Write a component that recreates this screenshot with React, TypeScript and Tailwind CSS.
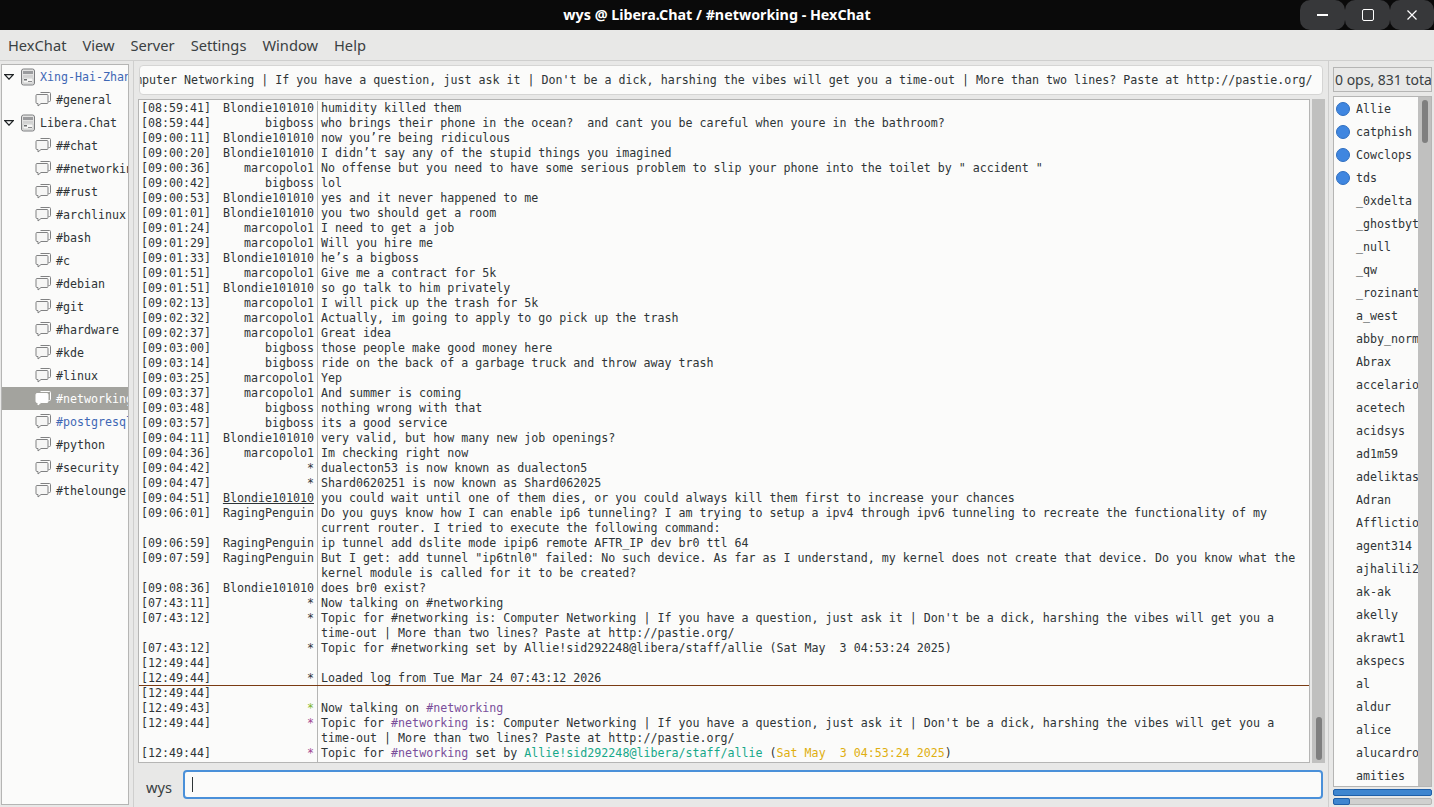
import React from 'react';

type Line = { time?: string; nick?: string; nickClass?: string; msg?: React.ReactNode };

const chan = <span className="text-[#7a4f9a]">#networking</span>;

const lines: Line[] = [
  { time: '08:59:41', nick: 'Blondie101010', msg: 'humidity killed them' },
  { time: '08:59:44', nick: 'bigboss', msg: 'who brings their phone in the ocean?  and cant you be careful when youre in the bathroom?' },
  { time: '09:00:11', nick: 'Blondie101010', msg: 'now you’re being ridiculous' },
  { time: '09:00:20', nick: 'Blondie101010', msg: 'I didn’t say any of the stupid things you imagined' },
  { time: '09:00:36', nick: 'marcopolo1', msg: 'No offense but you need to have some serious problem to slip your phone into the toilet by " accident "' },
  { time: '09:00:42', nick: 'bigboss', msg: 'lol' },
  { time: '09:00:53', nick: 'Blondie101010', msg: 'yes and it never happened to me' },
  { time: '09:01:01', nick: 'Blondie101010', msg: 'you two should get a room' },
  { time: '09:01:24', nick: 'marcopolo1', msg: 'I need to get a job' },
  { time: '09:01:29', nick: 'marcopolo1', msg: 'Will you hire me' },
  { time: '09:01:33', nick: 'Blondie101010', msg: 'he’s a bigboss' },
  { time: '09:01:51', nick: 'marcopolo1', msg: 'Give me a contract for 5k' },
  { time: '09:01:51', nick: 'Blondie101010', msg: 'so go talk to him privately' },
  { time: '09:02:13', nick: 'marcopolo1', msg: 'I will pick up the trash for 5k' },
  { time: '09:02:32', nick: 'marcopolo1', msg: 'Actually, im going to apply to go pick up the trash' },
  { time: '09:02:37', nick: 'marcopolo1', msg: 'Great idea' },
  { time: '09:03:00', nick: 'bigboss', msg: 'those people make good money here' },
  { time: '09:03:14', nick: 'bigboss', msg: 'ride on the back of a garbage truck and throw away trash' },
  { time: '09:03:25', nick: 'marcopolo1', msg: 'Yep' },
  { time: '09:03:37', nick: 'marcopolo1', msg: 'And summer is coming' },
  { time: '09:03:48', nick: 'bigboss', msg: 'nothing wrong with that' },
  { time: '09:03:57', nick: 'bigboss', msg: 'its a good service' },
  { time: '09:04:11', nick: 'Blondie101010', msg: 'very valid, but how many new job openings?' },
  { time: '09:04:36', nick: 'marcopolo1', msg: 'Im checking right now' },
  { time: '09:04:42', nick: '*', msg: 'dualecton53 is now known as dualecton5' },
  { time: '09:04:47', nick: '*', msg: 'Shard0620251 is now known as Shard062025' },
  { time: '09:04:51', nick: 'Blondie101010', nickClass: 'underline', msg: 'you could wait until one of them dies, or you could always kill them first to increase your chances' },
  { time: '09:06:01', nick: 'RagingPenguin', msg: 'Do you guys know how I can enable ip6 tunneling? I am trying to setup a ipv4 through ipv6 tunneling to recreate the functionality of my current router. I tried to execute the following command:' },
  { time: '09:06:59', nick: 'RagingPenguin', msg: 'ip tunnel add dslite mode ipip6 remote AFTR_IP dev br0 ttl 64' },
  { time: '09:07:59', nick: 'RagingPenguin', msg: 'But I get: add tunnel "ip6tnl0" failed: No such device. As far as I understand, my kernel does not create that device. Do you know what the kernel module is called for it to be created?' },
  { time: '09:08:36', nick: 'Blondie101010', msg: 'does br0 exist?' },
  { time: '07:43:11', nick: '*', msg: 'Now talking on #networking' },
  { time: '07:43:12', nick: '*', msg: "Topic for #networking is: Computer Networking | If you have a question, just ask it | Don't be a dick, harshing the vibes will get you a time-out | More than two lines? Paste at http://pastie.org/" },
  { time: '07:43:12', nick: '*', msg: 'Topic for #networking set by Allie!sid292248@libera/staff/allie (Sat May  3 04:53:24 2025)' },
  { time: '12:49:44' },
  { time: '12:49:44', nick: '*', msg: 'Loaded log from Tue Mar 24 07:43:12 2026' },
];

const newLines: Line[] = [
  { time: '12:49:44' },
  { time: '12:49:43', nick: '*', nickClass: 'text-[#7fb52a]', msg: <>Now talking on {chan}</> },
  {
    time: '12:49:44',
    nick: '*',
    nickClass: 'text-[#a0458f]',
    msg: <>Topic for {chan} is: Computer Networking | If you have a question, just ask it | Don't be a dick, harshing the vibes will get you a time-out | More than two lines? Paste at http://pastie.org/</>,
  },
  {
    time: '12:49:44',
    nick: '*',
    nickClass: 'text-[#a0458f]',
    msg: (
      <>
        Topic for {chan} set by <span className="text-[#16a889]">Allie!sid292248@libera/staff/allie</span> (
        <span className="text-[#dfaf0f]">Sat May  3 04:53:24 2025</span>)
      </>
    ),
  },
  {},
];

const channels: { name: string; cls?: string; selected?: boolean }[] = [
  { name: '##chat' },
  { name: '##networking' },
  { name: '##rust' },
  { name: '#archlinux' },
  { name: '#bash' },
  { name: '#c' },
  { name: '#debian' },
  { name: '#git' },
  { name: '#hardware' },
  { name: '#kde' },
  { name: '#linux' },
  { name: '#networking', selected: true },
  { name: '#postgresql', cls: 'text-[#3f68b5]' },
  { name: '#python' },
  { name: '#security' },
  { name: '#thelounge' },
];

const ops = ['Allie', 'catphish', 'Cowclops', 'tds'];
const users = [
  '_0xdelta', '_ghostbyte', '_null', '_qw', '_rozinante', 'a_west', 'abby_normal', 'Abrax', 'accelarion', 'acetech',
  'acidsys', 'ad1m59', 'adeliktas', 'Adran', 'Affliction', 'agent314', 'ajhalili2', 'ak-ak', 'akelly', 'akrawt1',
  'akspecs', 'al', 'aldur', 'alice', 'alucardrock', 'amities',
];

const ServerIcon = () => (
  <svg width="15" height="18" viewBox="0 0 15 18" className="shrink-0">
    <rect x="1.5" y="1" width="13" height="16" rx="2" fill="#e4e4e3" stroke="#7d7e80" />
    <rect x="3" y="3" width="10" height="3" fill="#9b9c9e" />
    <rect x="3" y="7.5" width="10" height="1" fill="#bfc0c1" />
    <rect x="3" y="10" width="10" height="5" fill="#f7f7f6" stroke="#a9aaab" strokeWidth="0.5" />
    <rect x="4" y="11" width="3" height="1.5" fill="#6d6e70" />
    <rect x="8" y="13" width="4" height="1" fill="#8a8b8d" />
  </svg>
);

const ChatIcon = ({ light }: { light?: boolean }) => (
  <svg width="17" height="17" viewBox="0 0 17 17" className="shrink-0">
    <path d="M5.5 1.5h9a1 1 0 0 1 1 1v7a1 1 0 0 1-1 1h-1" fill="none" stroke={light ? '#ffffff' : '#808182'} />
    <path
      d="M2 3.5h10a1 1 0 0 1 1 1v7a1 1 0 0 1-1 1H6l-3 2.5v-2.5H2a1 1 0 0 1-1-1v-7a1 1 0 0 1 1-1z"
      fill={light ? '#ffffff' : '#f6f6f5'}
      stroke={light ? '#ffffff' : '#808182'}
    />
  </svg>
);

const Arrow = () => (
  <svg width="10" height="6" viewBox="0 0 10 6" className="shrink-0">
    <path d="M.8.7h8.4L5 5.2z" fill="#fbfbfa" stroke="#1f2325" strokeWidth="1.2" />
  </svg>
);

const ChatRow = ({ line }: { line: Line }) => (
  <div className="flex leading-[15px] min-h-[15px]">
    <div className="w-[70px] shrink-0 pl-[2px] whitespace-pre">{line.time ? `[${line.time}]` : ''}</div>
    <div className={`w-[108px] shrink-0 text-right whitespace-pre pr-[3px] ${line.nickClass ?? ''}`}>{line.nick}</div>
    <div className="w-[1px] shrink-0 bg-[#b5b5b4]" />
    <div className="pl-[3px] flex-1 min-w-0 whitespace-pre-wrap">{line.msg}</div>
  </div>
);

export default function App() {
  return (
    <div className="w-[1434px] h-[807px] overflow-hidden flex flex-col bg-[#e8e8e7] text-[#2e3436] font-['Noto_Sans',sans-serif]">
      {/* title bar */}
      <div className="h-[30px] shrink-0 bg-[#0a0a0a] flex items-center relative">
        <div className="flex-1 text-center text-white font-bold text-[14.3px] leading-[30px]">
          wys @ Libera.Chat / #networking - HexChat
        </div>
        <div className="absolute right-0 top-0 flex">
          <div className="w-[45px] h-[30px] bg-[#37383a] rounded-[10px] flex items-center justify-center">
            <div className="w-[11px] h-[1.5px] bg-white" />
          </div>
          <div className="w-[45px] h-[30px] bg-[#37383a] rounded-[10px] flex items-center justify-center">
            <div className="w-[12px] h-[12px] border-[1.5px] border-white rounded-[2px]" />
          </div>
          <div className="w-[44px] h-[30px] bg-[#37383a] rounded-[10px] flex items-center justify-center">
            <svg width="12" height="12" viewBox="0 0 12 12">
              <path d="M1.5 1.5l9 9M10.5 1.5l-9 9" stroke="#fff" strokeWidth="1.2" />
            </svg>
          </div>
        </div>
      </div>

      {/* menu */}
      <div className="h-[31px] shrink-0 border-b border-[#cfcfce] flex items-center gap-[16px] pl-[8px] text-[14.67px] leading-[30px] text-[#3a4042]">
        <span>HexChat</span>
        <span>View</span>
        <span>Server</span>
        <span>Settings</span>
        <span>Window</span>
        <span>Help</span>
      </div>

      <div className="flex-1 min-h-0 flex">
        {/* server tree */}
        <div className="w-[133px] shrink-0 pl-[1px] pt-[3px] pb-[2px] pr-[4px]">
          <div className="h-full border border-[#b5b5b4] bg-[#fbfbfa] overflow-hidden font-['DejaVu_Sans_Mono',monospace] text-[11.65px] whitespace-nowrap">
            <div className="h-[23px] flex items-center pl-[2px]">
              <Arrow />
              <span className="ml-[6px]"><ServerIcon /></span>
              <span className="ml-[5px] pt-[2px] text-[#3f68b5]">Xing-Hai-Zhang</span>
            </div>
            <div className="h-[23px] flex items-center pl-[33px]">
              <ChatIcon />
              <span className="ml-[4px] pt-[2px]">#general</span>
            </div>
            <div className="h-[23px] flex items-center pl-[2px]">
              <Arrow />
              <span className="ml-[6px]"><ServerIcon /></span>
              <span className="ml-[5px] pt-[2px]">Libera.Chat</span>
            </div>
            {channels.map((c) => (
              <div
                key={c.name + (c.selected ? 's' : '')}
                className={`h-[23px] flex items-center pl-[33px] ${c.selected ? 'bg-[#a3a39e] text-white' : ''} ${c.cls ?? ''}`}
              >
                <ChatIcon light={c.selected} />
                <span className="ml-[4px] pt-[2px]">{c.name}</span>
              </div>
            ))}
          </div>
        </div>

        <div className="w-[1px] shrink-0 bg-[#cfcfce]" />

        {/* center */}
        <div className="w-[1194px] shrink-0 flex flex-col pl-[4px] pt-[4px] pb-[8px]">
          <div className="h-[30px] shrink-0 ml-[1px] mr-[5px] rounded-[4px] border border-[#d5d5d4] bg-[#fbfbfa] overflow-hidden flex items-center font-['DejaVu_Sans_Mono',monospace] text-[11.65px] whitespace-pre">
            <span className="pl-[3px] pr-[4px] pt-[2px]">
              <span className="-ml-[22px] inline-block">Computer Networking | If you have a question, just ask it | Don't be a dick, harshing the vibes will get you a time-out | More than two lines? Paste at http://pastie.org/</span>
            </span>
          </div>
          <div className="flex-1 min-h-0 flex mt-[4px]">
            <div className="w-[1172px] shrink-0 border border-[#b5b5b4] bg-[#fbfbfa] overflow-hidden pt-[1px] font-['DejaVu_Sans_Mono',monospace] text-[11.65px] text-[#2e3436]">
              {lines.map((l, i) => (
                <ChatRow key={i} line={l} />
              ))}
              <div className="h-[1px] bg-[#7a3b12] -mt-px relative" />
              {newLines.map((l, i) => (
                <ChatRow key={i} line={l} />
              ))}
            </div>
            <div className="w-[13px] ml-[2px] shrink-0 bg-[#c0c0bf] flex flex-col justify-end items-center pb-[3px]">
              <div className="w-[6px] h-[43px] rounded-full bg-[#7f7f7f]" />
            </div>
          </div>
          <div className="h-[29px] shrink-0 mt-[7px] flex items-center">
            <div className="w-[45px] pl-[8px] pt-[4px] text-[14.67px] text-[#3a4042]">wys</div>
            <div className="w-[1140px] h-[29px] rounded-[4px] border-2 border-[#4a90d9] bg-[#fbfbfa] flex items-center pl-[7px]">
              <div className="w-[1px] h-[15px] bg-[#2e3436]" />
            </div>
          </div>
        </div>

        <div className="w-[1px] shrink-0 bg-[#cfcfce]" />

        {/* user list */}
        <div className="flex-1 min-w-0 flex flex-col pl-[4px] pr-[2px] pt-[6px] pb-[2px]">
          <div className="h-[25px] shrink-0 border border-[#b5b5b4] pl-[1px] text-[14px] leading-[23px] whitespace-nowrap overflow-hidden text-[#3a4042]">
            0 ops, 831 total
          </div>
          <div className="flex-1 min-h-0 mt-[4px] border border-[#b5b5b4] flex overflow-hidden bg-[#fbfbfa]">
            <div className="flex-1 min-w-0 overflow-hidden font-['DejaVu_Sans_Mono',monospace] text-[11.65px] whitespace-nowrap">
              {ops.map((u) => (
                <div key={u} className="h-[23px] flex items-center pl-[2px]">
                  <span className="w-[14px] h-[14px] rounded-full bg-[#3f86e0] border border-[#2f6fc0] shrink-0" />
                  <span className="ml-[6px] pt-[2px]">{u}</span>
                </div>
              ))}
              {users.map((u) => (
                <div key={u} className="h-[23px] flex items-center pl-[22px] pt-[2px]">
                  {u}
                </div>
              ))}
            </div>
            <div className="w-[13px] shrink-0 bg-[#c0c0bf] flex justify-center pt-[3px]">
              <div className="w-[6px] h-[43px] rounded-full bg-[#7f7f7f]" />
            </div>
          </div>
          <div className="h-[7px] shrink-0 mt-[2px] rounded-[2px] border border-[#1f5fa8] bg-[#3f86d0]" />
          <div className="h-[7px] shrink-0 mt-[2px] rounded-[2px] border border-[#b5b5b4] bg-[#d0d0cf]">
            <div className="w-[15px] h-[5px] -mt-px -ml-px box-content border border-[#1f5fa8] rounded-[2px] bg-[#3f86d0]" />
          </div>
        </div>
      </div>
    </div>
  );
}
